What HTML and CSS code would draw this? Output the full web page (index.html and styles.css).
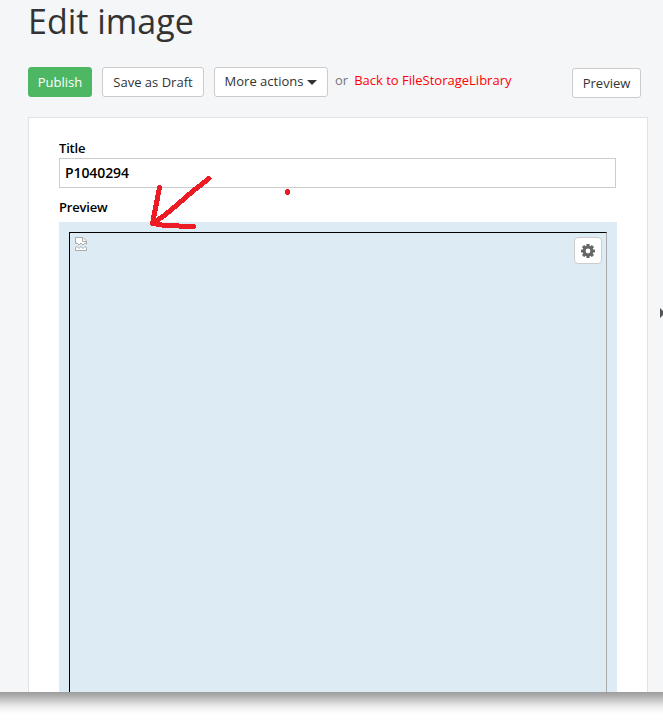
FILE: index.html
```html
<!DOCTYPE html>
<html lang="en">
<head>
<meta charset="utf-8">
<title>Edit image</title>
<link rel="stylesheet" href="styles.css">
</head>
<body>
<main class="screen">
  <h1 class="heading">Edit image</h1>
  <div class="toolbar">
    <button class="btn publish">Publish</button>
    <button class="btn draft">Save as Draft</button>
    <button class="btn more">More actions<span class="caret"></span></button>
    <span class="or">or</span>
    <a class="back">Back to FileStorageLibrary</a>
    <button class="btn preview-btn">Preview</button>
  </div>
  <section class="panel">
    <label class="label" for="title">Title</label>
    <input class="field" id="title" value="P1040294">
    <div class="label second">Preview</div>
    <div class="preview">
      <div class="frame">
        <svg class="broken" width="12" height="14" viewBox="0 0 12 14" fill="#fff" stroke="#aaa">
          <path d="M.5 6.500v-6h7.500l3.500 3.500v3l-1.500-1-2 2-2-2-2 2-2-2z"/>
          <path d="M7.500.5v4h4" fill="none"/>
          <path d="M.5 13.500v-3l1.500-1 2 2 2-2 2 2 2-2 1.500 1v3z"/>
        </svg>
        <button class="settings" aria-label="Settings">
          <svg width="14" height="14" viewBox="-7 -7 14 14">
            <g fill="#666">
              <circle r="5.300"/>
              <rect x="-1.600" y="-7" width="3.200" height="14" rx=".5"/>
              <rect x="-1.600" y="-7" width="3.200" height="14" rx=".5" transform="rotate(45)"/>
              <rect x="-1.600" y="-7" width="3.200" height="14" rx=".5" transform="rotate(90)"/>
              <rect x="-1.600" y="-7" width="3.200" height="14" rx=".5" transform="rotate(135)"/>
            </g>
            <circle r="2.400" fill="#fff"/>
          </svg>
        </button>
      </div>
    </div>
  </section>
  <span class="expand"></span>
  <svg class="marks" width="663" height="300" viewBox="0 0 663 300" fill="none" stroke="#ed1c24" stroke-width="5" stroke-linecap="round" stroke-linejoin="round" shape-rendering="crispEdges">
    <path d="M159.500 187.500L156.500 203L152.500 223.500L165 215L178 204L193 191L209 178.500M152.500 223.500L165 225.500L179 226L193.500 226.500"/>
    <path d="M287.500 191.500v1"/>
  </svg>
</main>
<div class="shade"></div>
</body>
</html>
```
FILE: styles.css
```css
* { box-sizing: border-box; }
body {
  margin: 0;
  height: 724px;
  overflow: hidden;
  background: #fff;
  color: #333;
  font: 13px/20px "Open Sans", "Noto Sans", sans-serif;
}
.screen {
  position: relative;
  display: flex;
  flex-direction: column;
  height: 692px;
  padding: 0 15px 0 28px;
  overflow: hidden;
  background: #f5f6f8;
}
.heading {
  flex: none;
  height: 67px;
  margin: 0;
  font-size: 34px;
  line-height: 42px;
  font-weight: 400;
}
.toolbar {
  display: flex;
  flex: none;
  align-items: flex-start;
  height: 50px;
  white-space: nowrap;
}
.btn {
  height: 30px;
  padding: 0;
  border: 1px solid #ccc;
  border-radius: 3px;
  background: #fff;
  color: #333;
  font: inherit;
}
.publish { width: 64px; border-color: #4eb763; background: #4eb763; color: #fff; }
.draft { width: 102px; margin-left: 10px; }
.more {
  display: flex;
  align-items: center;
  justify-content: center;
  width: 114px;
  margin-left: 10px;
  padding-bottom: 2px;
}
.caret {
  margin: 2px 0 0 4px;
  border: 5px solid transparent;
  border-top: 5px solid #333;
  border-bottom: 0;
}
.or { margin: 3px 0 0 7px; color: #777; }
.back { margin: 3px 0 0 6px; color: #f00; }
.preview-btn { width: 69px; margin: 1px 7px 0 auto; }
.panel {
  display: flex;
  flex: 1;
  flex-direction: column;
  min-height: 0;
  padding: 20px 30px 0;
  border: 1px solid #e0e2e3;
  border-bottom: 0;
  background: #fff;
}
.label { color: #000; font-weight: 600; letter-spacing: -.2px; }
.second { margin: 9px 0 5px; }
.field {
  width: 557px;
  height: 30px;
  padding: 0 5px 1px;
  border: 1px solid #ccc;
  color: #000;
  font: 600 14px "Open Sans", "Noto Sans", sans-serif;
  letter-spacing: -.1px;
}
.preview {
  display: flex;
  flex: 1;
  width: 558px;
  padding: 10px 10px 0;
  background: #ddebf4;
}
.frame {
  display: flex;
  flex: 1;
  align-items: flex-start;
  justify-content: space-between;
  padding: 4px 4px 0 5px;
  border: solid #000;
  border-width: 1px 1px 0;
  border-right-color: #aaa;
}
.settings {
  display: flex;
  align-items: center;
  justify-content: center;
  width: 28px;
  height: 27px;
  padding: 0;
  border: 1px solid #ccc;
  border-radius: 4px;
  background: #fff;
}
.expand {
  position: absolute;
  left: 660px;
  top: 308px;
  border: 5px solid transparent;
  border-left-color: #555;
  border-right: 0;
}
.marks { position: absolute; left: 0; top: 0; }
.shade {
  height: 32px;
  background: linear-gradient(#9d9d9d 0, #aaa 3px, #c7c7c7 8px, #e5e5e5 13px, #f7f7f7 18px, #fff 23px);
}
```
